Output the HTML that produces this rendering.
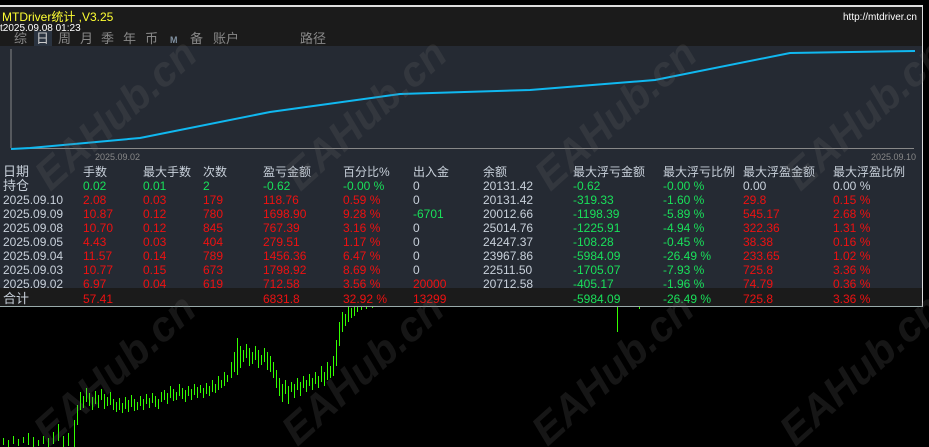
<!DOCTYPE html>
<html><head><meta charset="utf-8"><style>
html,body{margin:0;width:929px;height:447px;overflow:hidden;}
body{background:#000;font-family:"Liberation Sans","Noto Sans CJK SC",sans-serif;}
#root{position:relative;width:929px;height:447px;overflow:hidden;background:#000;}
#panel{position:absolute;left:0;top:5px;width:922px;height:299px;background:#252a33;border-top:2px solid #ddd;border-right:1px solid #ddd;border-bottom:1px solid #9aa;}
#hdr{position:absolute;left:0;top:0;width:922px;height:39px;background:#1b1b1b;}
.t{position:absolute;white-space:nowrap;font-size:12px;line-height:14px;}
#tot{position:absolute;left:0;top:281px;width:922px;height:18px;background:#1b1b1b;}
.w{color:#c8d0da}.g{color:#19e05a}.r{color:#ee1111}.gr{color:#888}
.row{position:absolute;left:0;height:14px;width:922px}
.row span{position:absolute;top:0;white-space:nowrap;font-size:12px;line-height:14px}
.c1{left:3px}.c2{left:83px}.c3{left:143px}.c4{left:203px}.c5{left:263px}.c6{left:343px}.c7{left:413px}.c8{left:483px}.c9{left:573px}.c10{left:663px}.c11{left:743px}.c12{left:833px}
</style></head><body><div id="root">
<svg width="929" height="447" style="position:absolute;left:0;top:0">
<path stroke="#33ff00" stroke-width="1" fill="none" d="M3.5 438V445M8.5 440V447M13.5 436V444M18.5 439V446M23.5 437V443M28.5 433V445M33.5 437V447M38.5 440V446M43.5 436V444M48.5 438V447M53.5 432V444M58.5 424V441M63.5 436V447M68.5 433V446M74.5 420V447M77.5 405V425M80.5 392V410M83.5 396V408M86.5 388V402M89.5 393V406M92.5 397V410M95.5 391V404M98.5 395V408M101.5 389V400M104.5 394V409M107.5 397V406M110.5 392V405M113.5 399V410M116.5 402V412M119.5 398V410M122.5 403V413M125.5 397V409M128.5 400V412M131.5 395V407M134.5 399V411M137.5 402V410M140.5 396V406M143.5 399V410M146.5 394V404M149.5 398V408M152.5 393V403M155.5 396V407M158.5 399V409M161.5 392V402M164.5 390V400M167.5 393V404M170.5 386V398M173.5 389V401M176.5 392V400M179.5 384V396M182.5 388V399M185.5 390V402M188.5 386V396M191.5 389V400M194.5 384V395M197.5 387V398M200.5 385V393M203.5 388V398M206.5 383V394M209.5 386V396M212.5 380V392M215.5 384V393M218.5 376V390M221.5 380V388M224.5 372V386M227.5 375V382M231.5 362V378M234.5 352V372M237.5 338V375M240.5 346V368M243.5 350V362M246.5 344V358M249.5 348V366M252.5 352V364M255.5 346V360M258.5 350V368M261.5 355V365M264.5 348V362M267.5 352V370M270.5 356V372M273.5 362V378M276.5 370V388M279.5 378V396M282.5 384V402M285.5 380V394M288.5 386V404M291.5 382V392M294.5 384V398M297.5 378V390M300.5 382V396M303.5 376V388M306.5 380V392M309.5 374V386M312.5 378V390M315.5 372V384M318.5 376V388M321.5 366V382M324.5 372V386M327.5 362V380M330.5 366V378M333.5 356V376M336.5 340V366M339.5 322V346M342.5 312V332M345.5 314V326M348.5 306V322M351.5 308V318M354.5 305V316M357.5 305V312M361.5 305V310M366.5 305V309M372.5 305V308M617.5 305V332M639.5 305V309"/>
</svg>
<div id="panel">
<div id="hdr"></div>
<div class="t" style="left:2px;top:3px;color:#ffff33;font-size:12px">MTDriver统计 ,V3.25</div>
<div class="t" style="left:0;top:16px;color:#fff;font-size:10px;line-height:11px">t2025.09.08 01:23</div>
<div class="t" style="left:843px;top:4px;color:#fff;font-size:10px">http://mtdriver.cn</div>
<div style="position:absolute;left:34px;top:24px;width:18px;height:15px;background:#2a3340"></div>
<div class="t gr" style="left:14px;top:25px;font-size:13px">综</div>
<div class="t" style="left:36px;top:25px;font-size:13px;color:#ccc">日</div>
<div class="t gr" style="left:58px;top:25px;font-size:13px">周</div>
<div class="t gr" style="left:80px;top:25px;font-size:13px">月</div>
<div class="t gr" style="left:101px;top:25px;font-size:13px">季</div>
<div class="t gr" style="left:123px;top:25px;font-size:13px">年</div>
<div class="t gr" style="left:145px;top:25px;font-size:13px">币</div>
<div class="t" style="left:170px;top:26px;font-size:9px;color:#8090a0;font-weight:bold">M</div>
<div class="t gr" style="left:190px;top:25px;font-size:13px">备</div>
<div class="t gr" style="left:213px;top:25px;font-size:13px">账户</div>
<div class="t gr" style="left:300px;top:25px;font-size:13px">路径</div>
<svg width="922" height="160" style="position:absolute;left:0;top:0">
<line x1="11" y1="42" x2="11" y2="141" stroke="#888"/>
<line x1="11" y1="141.5" x2="914" y2="141.5" stroke="#888"/>
<polyline fill="none" stroke="#10b8f0" stroke-width="2" points="11,142 30,141 140,131 270,105 400,87 530,83 655,73 790,46 915,44"/>
</svg>
<div class="t gr" style="left:95px;top:143px;font-size:9px">2025.09.02</div>
<div class="t gr" style="left:871px;top:143px;font-size:9px">2025.09.10</div>
<div id="tot"></div>
<div class="row" style="top:158px"><span class="c1 w" style="font-size:13px">日期</span><span class="c2 w">手数</span><span class="c3 w">最大手数</span><span class="c4 w">次数</span><span class="c5 w">盈亏金额</span><span class="c6 w">百分比%</span><span class="c7 w">出入金</span><span class="c8 w">余额</span><span class="c9 w">最大浮亏金额</span><span class="c10 w">最大浮亏比例</span><span class="c11 w">最大浮盈金额</span><span class="c12 w">最大浮盈比例</span></div>
<div class="row" style="top:172px"><span class="c1 w" style="font-size:13px">持仓</span><span class="c2 g">0.02</span><span class="c3 g">0.01</span><span class="c4 g">2</span><span class="c5 g">-0.62</span><span class="c6 g">-0.00 %</span><span class="c7 w">0</span><span class="c8 w">20131.42</span><span class="c9 g">-0.62</span><span class="c10 g">-0.00 %</span><span class="c11 w">0.00</span><span class="c12 w">0.00 %</span></div>
<div class="row" style="top:186px"><span class="c1 w">2025.09.10</span><span class="c2 r">2.08</span><span class="c3 r">0.03</span><span class="c4 r">179</span><span class="c5 r">118.76</span><span class="c6 r">0.59 %</span><span class="c7 w">0</span><span class="c8 w">20131.42</span><span class="c9 g">-319.33</span><span class="c10 g">-1.60 %</span><span class="c11 r">29.8</span><span class="c12 r">0.15 %</span></div>
<div class="row" style="top:200px"><span class="c1 w">2025.09.09</span><span class="c2 r">10.87</span><span class="c3 r">0.12</span><span class="c4 r">780</span><span class="c5 r">1698.90</span><span class="c6 r">9.28 %</span><span class="c7 g">-6701</span><span class="c8 w">20012.66</span><span class="c9 g">-1198.39</span><span class="c10 g">-5.89 %</span><span class="c11 r">545.17</span><span class="c12 r">2.68 %</span></div>
<div class="row" style="top:214px"><span class="c1 w">2025.09.08</span><span class="c2 r">10.70</span><span class="c3 r">0.12</span><span class="c4 r">845</span><span class="c5 r">767.39</span><span class="c6 r">3.16 %</span><span class="c7 w">0</span><span class="c8 w">25014.76</span><span class="c9 g">-1225.91</span><span class="c10 g">-4.94 %</span><span class="c11 r">322.36</span><span class="c12 r">1.31 %</span></div>
<div class="row" style="top:228px"><span class="c1 w">2025.09.05</span><span class="c2 r">4.43</span><span class="c3 r">0.03</span><span class="c4 r">404</span><span class="c5 r">279.51</span><span class="c6 r">1.17 %</span><span class="c7 w">0</span><span class="c8 w">24247.37</span><span class="c9 g">-108.28</span><span class="c10 g">-0.45 %</span><span class="c11 r">38.38</span><span class="c12 r">0.16 %</span></div>
<div class="row" style="top:242px"><span class="c1 w">2025.09.04</span><span class="c2 r">11.57</span><span class="c3 r">0.14</span><span class="c4 r">789</span><span class="c5 r">1456.36</span><span class="c6 r">6.47 %</span><span class="c7 w">0</span><span class="c8 w">23967.86</span><span class="c9 g">-5984.09</span><span class="c10 g">-26.49 %</span><span class="c11 r">233.65</span><span class="c12 r">1.02 %</span></div>
<div class="row" style="top:256px"><span class="c1 w">2025.09.03</span><span class="c2 r">10.77</span><span class="c3 r">0.15</span><span class="c4 r">673</span><span class="c5 r">1798.92</span><span class="c6 r">8.69 %</span><span class="c7 w">0</span><span class="c8 w">22511.50</span><span class="c9 g">-1705.07</span><span class="c10 g">-7.93 %</span><span class="c11 r">725.8</span><span class="c12 r">3.36 %</span></div>
<div class="row" style="top:270px"><span class="c1 w">2025.09.02</span><span class="c2 r">6.97</span><span class="c3 r">0.04</span><span class="c4 r">619</span><span class="c5 r">712.58</span><span class="c6 r">3.56 %</span><span class="c7 r">20000</span><span class="c8 w">20712.58</span><span class="c9 g">-405.17</span><span class="c10 g">-1.96 %</span><span class="c11 r">74.79</span><span class="c12 r">0.36 %</span></div>
<div class="row" style="top:285px"><span class="c1 w" style="font-size:13px">合计</span><span class="c2 r">57.41</span><span class="c5 r">6831.8</span><span class="c6 r">32.92 %</span><span class="c7 r">13299</span><span class="c9 g">-5984.09</span><span class="c10 g">-26.49 %</span><span class="c11 r">725.8</span><span class="c12 r">3.36 %</span></div>
</div>
<svg width="929" height="447" style="position:absolute;left:0;top:0">
<g font-family="Liberation Sans,sans-serif" font-size="42" font-style="italic" font-weight="bold" fill="rgba(110,110,110,0.2)" text-anchor="middle">
<text transform="translate(125,125) rotate(-42)">EAHub.cn</text>
<text transform="translate(375,125) rotate(-42)">EAHub.cn</text>
<text transform="translate(625,125) rotate(-42)">EAHub.cn</text>
<text transform="translate(875,125) rotate(-42)">EAHub.cn</text>
<text transform="translate(124,380) rotate(-42)">EAHub.cn</text>
<text transform="translate(372,380) rotate(-42)">EAHub.cn</text>
<text transform="translate(622,380) rotate(-42)">EAHub.cn</text>
<text transform="translate(870,380) rotate(-42)">EAHub.cn</text>
</g></svg>
</div>
</body></html>
